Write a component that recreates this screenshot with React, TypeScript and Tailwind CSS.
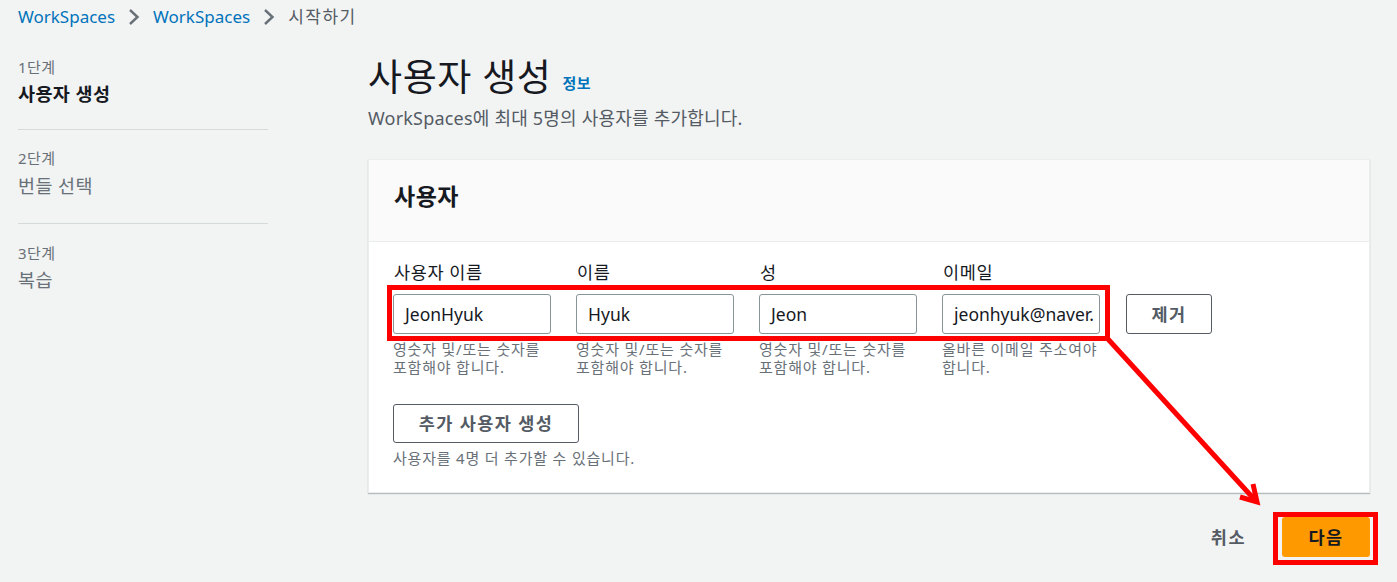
import React from "react";

const font = { fontFamily: '"Noto Sans", "Noto Sans CJK KR", sans-serif' };

function Chevron() {
  return (
    <svg width="16" height="18" viewBox="0 0 16 18" className="mx-[11px]">
      <path d="M4 2 L11.5 9 L4 16" fill="none" stroke="#687078" strokeWidth="2.4" />
    </svg>
  );
}

function Field({ label, value, hint }: { label: string; value: string; hint: string[] }) {
  return (
    <div className="w-[158px] flex flex-col">
      <div className="text-[17.5px] leading-[22px] tracking-[0.6px] text-[#16191f] h-[22px] ml-px whitespace-nowrap">{label}</div>
      <div className="mt-[11px] h-[40px] border border-[#879596] rounded-[3px] bg-white flex items-center px-[11px] text-[17.5px] text-[#16191f] overflow-hidden whitespace-nowrap">
        {value}
      </div>
      <div className="mt-[6px] text-[15px] leading-[18px] tracking-[0.8px] text-[#687078] whitespace-nowrap">
        {hint.map((h) => (
          <div key={h}>{h}</div>
        ))}
      </div>
    </div>
  );
}

export default function App() {
  return (
    <div className="relative w-[1397px] h-[582px] bg-[#f2f3f3] overflow-hidden" style={font}>
      {/* breadcrumb */}
      <div className="flex items-center h-[34px] pl-[18px] text-[17px] leading-[22px]">
        <span className="text-[#0073bb]">WorkSpaces</span>
        <Chevron />
        <span className="text-[#0073bb]">WorkSpaces</span>
        <Chevron />
        <span className="text-[#545b64] tracking-[1.5px]">시작하기</span>
      </div>

      <div className="flex pl-[18px]">
        {/* nav */}
        <div className="w-[250px] flex flex-col pt-[23px]">
          <div className="text-[15px] leading-[20px] tracking-[0.4px] text-[#687078]">1단계</div>
          <div className="text-[18.5px] leading-[26px] tracking-[0.4px] font-bold text-[#16191f] mt-[4px]">사용자 생성</div>
          <div className="border-b border-[#d5dbdb] mt-[22px]" />
          <div className="text-[15px] leading-[20px] tracking-[0.4px] text-[#687078] mt-[18px]">2단계</div>
          <div className="text-[18.5px] leading-[26px] tracking-[0.4px] text-[#687078] mt-[5px]">번들 선택</div>
          <div className="border-b border-[#d5dbdb] mt-[24px]" />
          <div className="text-[15px] leading-[20px] tracking-[0.4px] text-[#687078] mt-[19px]">3단계</div>
          <div className="text-[18.5px] leading-[26px] tracking-[0.4px] text-[#687078] mt-[4px]">복습</div>
        </div>

        {/* main */}
        <div className="ml-[100px] w-[1002px] flex flex-col pt-[21px]">
          <div className="flex items-end h-[44px]">
            <h1 className="text-[37px] leading-[44px] tracking-[0.6px] text-[#16191f] font-normal">사용자 생성</h1>
            <span className="ml-[11px] mb-[7px] text-[15px] leading-[18px] tracking-[0.5px] font-bold text-[#0073bb]">정보</span>
          </div>
          <div className="mt-[7px] text-[18px] leading-[24px] tracking-[0.2px] text-[#545b64]">
            WorkSpaces에 최대 5명의 사용자를 추가합니다.
          </div>

          <div className="mt-[29px] bg-white border border-[#eaeded] shadow-[0_1px_1px_0_rgba(0,28,36,0.25)]">
            <div className="h-[82px] bg-[#fafafa] border-b border-[#eaeded] pl-[25px] pt-[21px]">
              <span className="text-[23px] leading-[30px] tracking-[0.5px] font-bold text-[#16191f]">사용자</span>
            </div>
            <div className="pl-[24px] pt-[19px] pb-[25px]">
              <div className="flex gap-[25px]">
                <Field label="사용자 이름" value="JeonHyuk" hint={["영숫자 및/또는 숫자를", "포함해야 합니다."]} />
                <Field label="이름" value="Hyuk" hint={["영숫자 및/또는 숫자를", "포함해야 합니다."]} />
                <Field label="성" value="Jeon" hint={["영숫자 및/또는 숫자를", "포함해야 합니다."]} />
                <Field label="이메일" value="jeonhyuk@naver." hint={["올바른 이메일 주소여야", "합니다."]} />
                <div className="pt-[33px]">
                  <div className="ml-[1px] w-[86px] h-[40px] border border-[#545b64] rounded-[3px] flex items-center justify-center text-[17.5px] tracking-[1.5px] font-bold text-[#545b64]">
                    제거
                  </div>
                </div>
              </div>
              <div className="mt-[28px] w-[186px] h-[39px] border border-[#545b64] rounded-[3px] flex items-center justify-center text-[17.5px] tracking-[1.4px] font-bold text-[#545b64]">
                추가 사용자 생성
              </div>
              <div className="mt-[6px] text-[15px] leading-[18px] tracking-[0.8px] text-[#687078]">사용자를 4명 더 추가할 수 있습니다.</div>
            </div>
          </div>

          <div className="flex justify-end items-center mt-[24px]">
            <span className="text-[17.5px] tracking-[1.5px] font-bold text-[#545b64] mr-[36px]">취소</span>
            <div className="w-[88px] h-[40px] bg-[#ff9900] rounded-[3px] flex items-center justify-center text-[17.5px] tracking-[1.5px] font-bold text-[#16191f]">
              다음
            </div>
          </div>
        </div>
      </div>

      {/* annotations */}
      <div className="absolute left-[387px] top-[285px] w-[723px] h-[56px] border-[5px] border-[#ff0000]" />
      <div className="absolute left-[1273px] top-[512px] w-[105px] h-[53px] border-[5px] border-[#ff0000]" />
      <svg className="absolute left-0 top-0" width="1397" height="582">
        <line x1="1107" y1="338" x2="1254" y2="499" stroke="#ff0000" strokeWidth="5" />
        <path d="M1240 497 L1257 502 L1253 484" fill="none" stroke="#ff0000" strokeWidth="5" strokeLinejoin="miter" />
      </svg>
    </div>
  );
}
